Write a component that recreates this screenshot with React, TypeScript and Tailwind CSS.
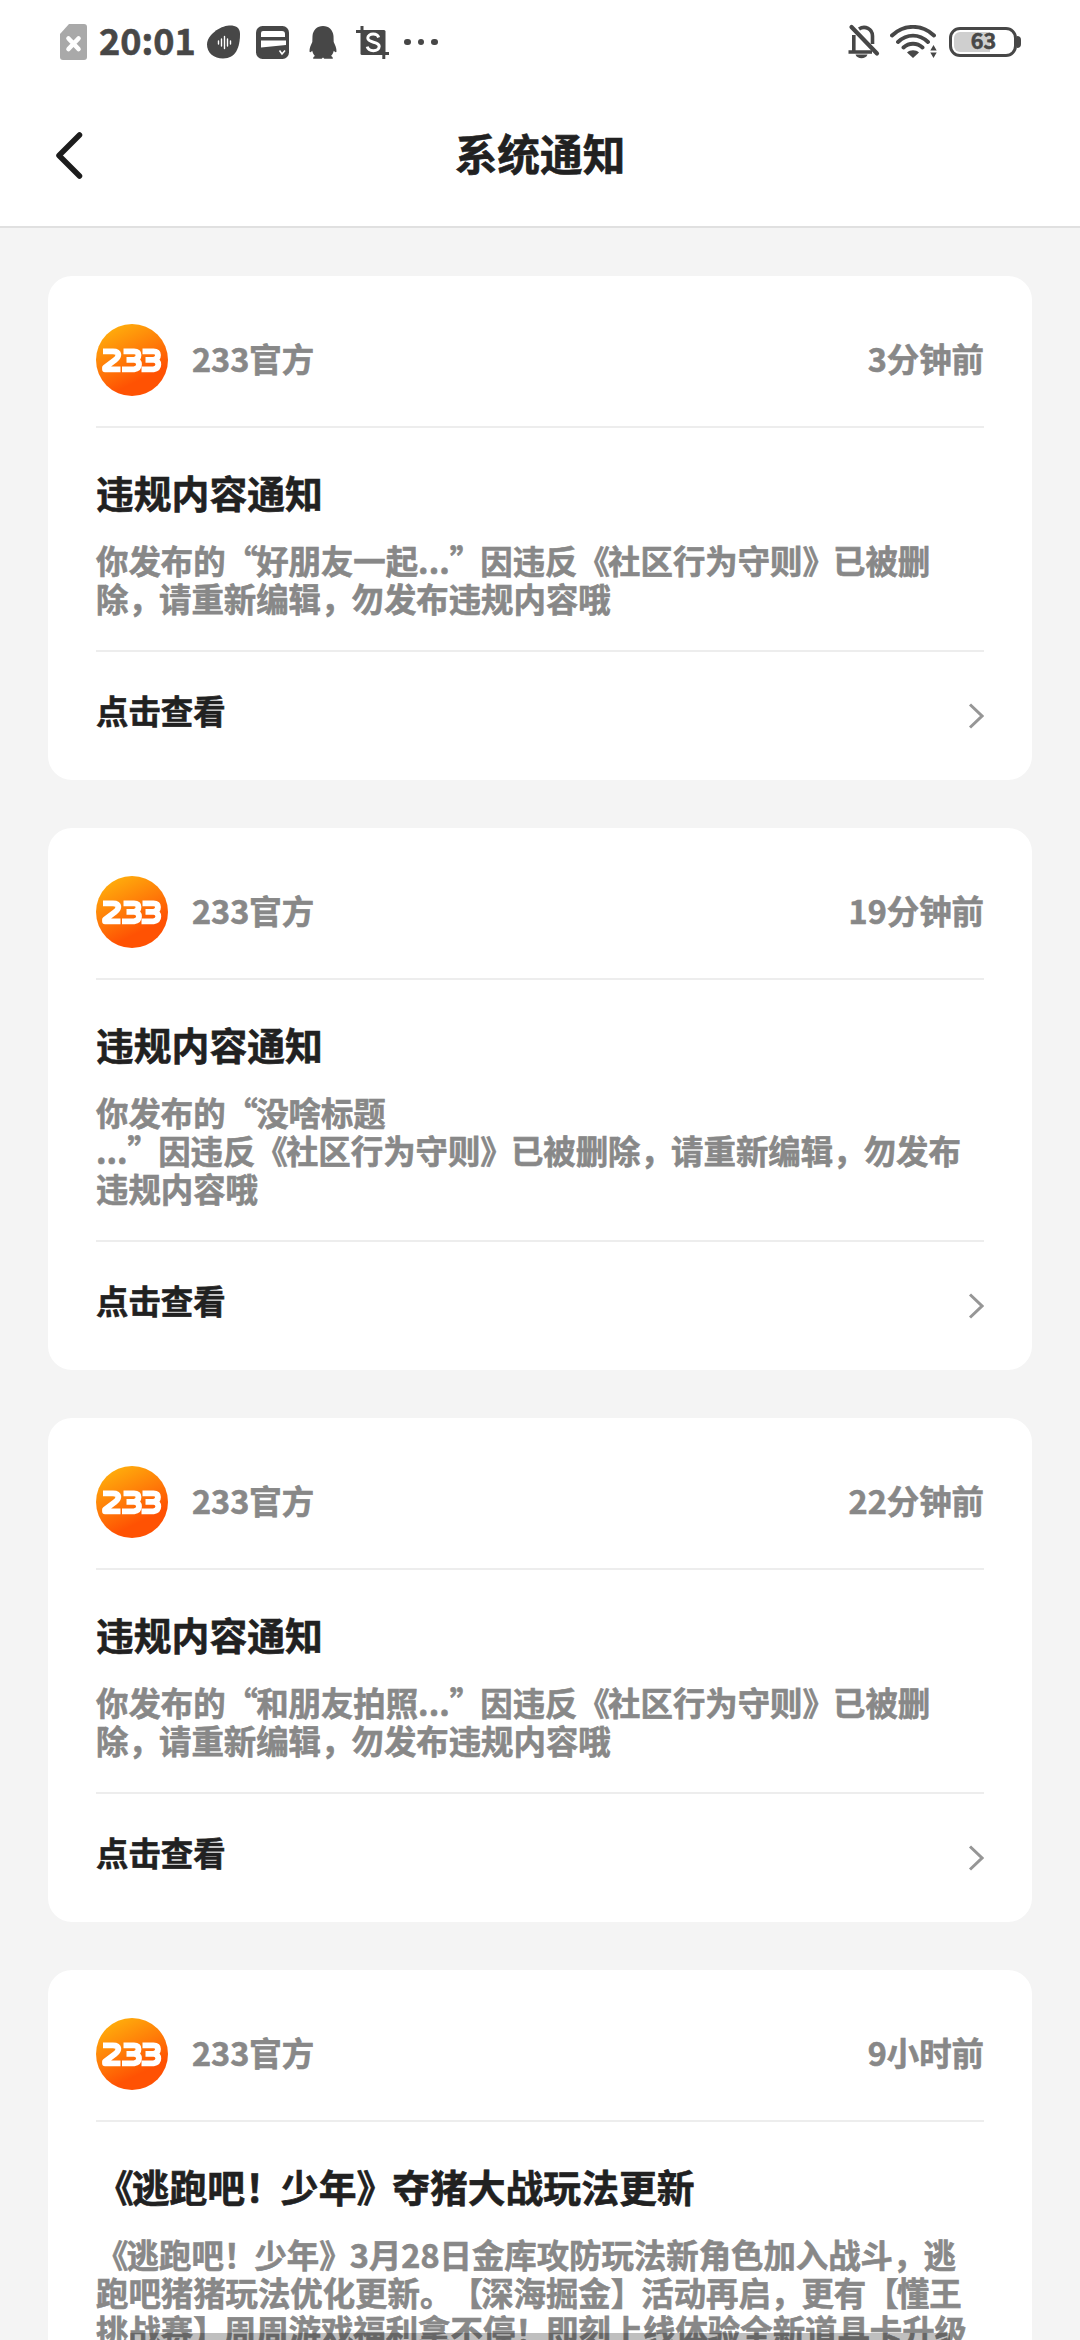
import React from "react";

type Notice = {
  time: string;
  title: string;
  lines: string[];
};

const violation = "违规内容通知";

const notices: Notice[] = [
  {
    time: "3分钟前",
    title: violation,
    lines: ["你发布的“好朋友一起...”因违反《社区行为守则》已被删", "除，请重新编辑，勿发布违规内容哦"],
  },
  {
    time: "19分钟前",
    title: violation,
    lines: ["你发布的“没啥标题", "...”因违反《社区行为守则》已被删除，请重新编辑，勿发布", "违规内容哦"],
  },
  {
    time: "22分钟前",
    title: violation,
    lines: ["你发布的“和朋友拍照...”因违反《社区行为守则》已被删", "除，请重新编辑，勿发布违规内容哦"],
  },
  {
    time: "9小时前",
    title: "《逃跑吧！少年》夺猪大战玩法更新",
    lines: [
      "《逃跑吧！少年》3月28日金库攻防玩法新角色加入战斗，逃",
      "跑吧猪猪玩法优化更新。【深海掘金】活动再启，更有【懂王",
      "挑战赛】周周游戏福利拿不停！即刻上线体验全新道具卡升级",
    ],
  },
];

/* Full-width punctuation is set slightly tighter than the ideographs. */
function Tight({ text }: { text: string }) {
  return (
    <>
      {text.split(/([“”《》，。！【】])/).map((part, i) =>
        i % 2 ? (
          <span key={i} className="-tracking-[0.055em]">{part}</span>
        ) : (
          part
        ),
      )}
    </>
  );
}

function StatusBar() {
  return (
    <div className="flex h-[84px] items-center pl-[60px] pr-[59px] text-[#474747]">
      <svg className="h-9 w-[27px] shrink-0" viewBox="0 0 27 36">
        <path d="M9 0H24a3 3 0 0 1 3 3V33a3 3 0 0 1-3 3H3a3 3 0 0 1-3-3V10Z" fill="#a9a9a9" />
        <path d="M8.500 14.500l10 10.500M18.500 14.500l-10 10.500" stroke="#fff" strokeWidth="4.600" strokeLinecap="round" />
      </svg>
      <span className="ml-[12px] w-[95px] whitespace-nowrap pb-[6px] text-[36px] leading-[76px]">20:01</span>
      <svg className="ml-[13px] h-[34px] w-[33px] shrink-0" viewBox="0 0 33 34">
        <path d="M22 .5C28 .2 33 2 33 9c0 13-4 24.500-17 24.500C7 33.500 0 28 0 19.500 0 10 13 1 22 .5Z" fill="currentColor" />
        <path d="M11.500 16v3M14.500 14v7M17.500 11.500v12M20.500 14v7M23.500 16v3" stroke="#fff" strokeWidth="1.400" strokeLinecap="round" />
      </svg>
      <svg className="ml-4 h-[33px] w-[33px] shrink-0" viewBox="0 0 33 33">
        <rect width="33" height="33" rx="6.500" fill="currentColor" />
        <path d="M7 5H26a3 3 0 0 1 3 3v3H5V7a2 2 0 0 1 2-2ZM5 14.500H30v4.500L5 21.500Z" fill="#fff" />
        <path d="M23.500 24.500l2.500 3.500 3-3.500" fill="none" stroke="#fff" strokeWidth="1.600" />
      </svg>
      <svg className="ml-5 h-[33px] w-[28px] shrink-0" viewBox="0 0 28 33">
        <path
          d="M14 0C20 0 24 4 24.500 10L24.700 16C26 19 27.700 22 27.500 25.500 27 27 25.800 26 24.800 24.800 24.300 27 23.300 28.700 22 30 23.500 30.700 24 31.500 23.800 32.800H15.300L14 31.500 12.700 32.800H4.200C4 31.500 4.500 30.700 6 30 4.700 28.700 3.700 27 3.200 24.800 2.200 26 1 27 .5 25.500.3 22 2 19 3.300 16L3.500 10C4 4 8 0 14 0Z"
          fill="currentColor"
        />
      </svg>
      <svg className="ml-[19px] h-[33px] w-[33px] shrink-0" viewBox="0 0 33 33">
        <rect x="4.500" y="4" width="25" height="25" rx="1.500" fill="currentColor" />
        <path d="M6 0V6M0 5.500H7M27.800 27V33M26 27.500h7" stroke="currentColor" strokeWidth="3" />
        <path d="M22.600 11.500C22 9.300 19.800 8 17.200 8c-3 0-5.400 1.600-5.400 4.100 0 5.500 11.400 2.700 11.400 8.200 0 2.700-2.600 4.400-5.800 4.400-3 0-5.500-1.500-6.200-4" fill="none" stroke="#fff" strokeWidth="3" />
      </svg>
      <div className="ml-[15px] flex gap-[7px]">
        <i className="h-[6.500px] w-[6.500px] rounded-full bg-[#474747]" />
        <i className="h-[6.500px] w-[6.500px] rounded-full bg-[#474747]" />
        <i className="h-[6.500px] w-[6.500px] rounded-full bg-[#474747]" />
      </div>

      <svg className="ml-auto h-[36px] w-[32px] shrink-0" viewBox="0 0 32 36" fill="none" stroke="currentColor" strokeWidth="3.600">
        <path d="M5.800 11V27M11 5C17 1 24.500 5 24.500 12V20M0.500 28H24" />
        <path d="M7.500 30.500C9 35.500 18 35.500 19.500 30.500Z" fill="currentColor" stroke="none" />
        <path d="M3.500 3L29 29.500" strokeWidth="4.200" strokeLinecap="round" />
      </svg>
      <svg className="ml-[10px] h-[34px] w-[48px] shrink-0" viewBox="0 0 48 34" fill="none" stroke="currentColor" strokeWidth="3.900" strokeLinecap="round">
        <path d="M2 10.500C14-1 32-1 44 10.500M8 17C17 8.500 29 8.500 38 17M13.500 22.500C19 17.500 27 17.500 32.500 22.500" />
        <path d="M17 27.500C20 24.500 26 24.500 29 27.500L23 33Z" fill="currentColor" stroke="none" />
        <path d="M43.500 20l3.200 5.500h-6.400ZM43.500 33l3.200-5.500h-6.400Z" fill="currentColor" stroke="none" />
      </svg>
      <div className="ml-[11px] flex items-center">
        <div className="flex h-[30px] w-[68px] rounded-[11px] border-[3px] border-[#474747] p-[2px]">
          <div className="flex h-5 w-9 rounded-l-[6px] bg-[#cfcfcf]">
            <span className="block w-[58px] shrink-0 pl-[1px] text-center text-[21.500px] leading-[15px]">63</span>
          </div>
        </div>
        <div className="h-[12px] w-[4px] rounded-r-full bg-[#474747]" />
      </div>
    </div>
  );
}

function Avatar() {
  return (
    <svg className="size-[72px] shrink-0" viewBox="0 0 72 72">
      <defs>
        <linearGradient id="disc" x1="0.150" y1="0.050" x2="0.600" y2="0.950">
          <stop offset="0" stopColor="#ffb00c" />
          <stop offset="0.500" stopColor="#ff7a08" />
          <stop offset="0.850" stopColor="#ff5203" />
        </linearGradient>
      </defs>
      <circle cx="36" cy="36" r="36" fill="url(#disc)" />
      <g fill="none" stroke="#fff" strokeWidth="5.800" strokeLinejoin="round">
        <path d="M7 27.300H17C24 27.300 23.500 32.500 19 36L9 43.500V45.300H24.500" />
        <path d="M27.500 27.300H38Q42.500 27.300 42.500 31T38.500 35.800H30.500M38.500 35.800Q43 36.500 43 40.500T38 45.300H26" />
        <path d="M46.500 27.300H57.500Q62 27.300 62 31T58 35.800H49.500M58 35.800Q62.300 36.500 62.300 40.500T57.500 45.300H45.500" />
      </g>
    </svg>
  );
}

function Card({ notice }: { notice: Notice }) {
  return (
    <article className="shrink-0 rounded-3xl bg-white px-12">
      <div className="flex h-[152px] items-center border-b-2 border-[#ededed] pt-12 pb-[30px] text-[32.400px] leading-[68px] text-[#888]">
        <Avatar />
        <span className="ml-6 pb-1">233官方</span>
        <span className="ml-auto pb-1">{notice.time}</span>
      </div>
      <div className="pt-[42px] pb-[33px]">
        <h2 className="whitespace-nowrap text-[37.800px] leading-[44px] text-[#212121]">
          <Tight text={notice.title} />
        </h2>
        <div className="mt-[27px] text-[32.400px] leading-[38px] text-[#888]">
          {notice.lines.map((line) => (
            <p key={line} className="whitespace-nowrap">
              <Tight text={line} />
            </p>
          ))}
        </div>
      </div>
      <div className="flex h-[130px] justify-between border-t-2 border-[#ededed]">
        <span className="text-[32.400px] leading-[115px] text-[#212121]">点击查看</span>
        <svg className="mt-[50px] h-7 w-4" viewBox="0 0 16 28" fill="none" stroke="#969696" strokeWidth="3">
          <path d="M2 2.500L14 14L2 25.500" />
        </svg>
      </div>
    </article>
  );
}

export default function App() {
  return (
    <div className="relative flex h-[2340px] w-[1080px] flex-col overflow-hidden bg-[#f4f4f4] font-['Noto_Sans_CJK_SC',sans-serif] font-bold [-webkit-text-stroke:0.6px] [text-spacing-trim:space-all]">
      <header className="h-[228px] shrink-0 border-b-2 border-[#e0e0e0] bg-white">
        <StatusBar />
        <div className="grid h-[142px] grid-cols-[1fr_auto_1fr] items-center">
          <svg className="mb-[1px] ml-[54px] h-[50px] w-[30px]" viewBox="0 0 30 50" fill="none" stroke="#1c1c1c" strokeWidth="5.500" strokeLinecap="round" strokeLinejoin="round">
            <path d="M25.500 5L5 25.500L25.500 46" />
          </svg>
          <h1 className="pb-[7px] text-[42.700px] leading-[64px] text-[#212121]">系统通知</h1>
        </div>
      </header>
      <main className="flex flex-col gap-12 px-12 pt-12">
        {notices.map((notice) => (
          <Card key={notice.time} notice={notice} />
        ))}
      </main>
      <div className="absolute bottom-0 left-1/2 h-[7px] w-[820px] -translate-x-1/2 bg-black/25" />
    </div>
  );
}
